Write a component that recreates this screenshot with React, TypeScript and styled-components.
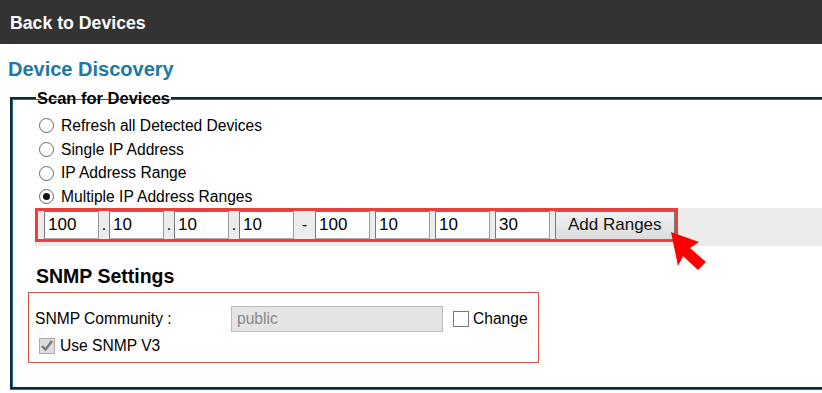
import { FC } from 'react';
import { styled, createGlobalStyle } from 'styled-components';

const GlobalStyle = createGlobalStyle`
    body {
        margin: 0;
        background: #fff;
        font-family: "Liberation Sans", Arial, sans-serif;
        color: #000;
        overflow: hidden;
    }
`;

const Page = styled.div`
    width: 822px;
    height: 393px;
    overflow: hidden;
    position: relative;
`;

const TopBar = styled.div`
    height: 44px;
    background: #333333;
    color: #fff;
    font-size: 17.7px;
    font-weight: bold;
    line-height: 46px;
    padding-left: 10px;
`;

const Title = styled.h1`
    margin: 13px 0 0 8px;
    font-size: 20px;
    line-height: 24px;
    font-weight: bold;
    color: #1a7aa5;
`;

const Scan = styled.fieldset`
    margin: 8px -30px 0 10px;
    padding: 7px 0 24px 23px;
    border: 2px solid #0e2a35;
    box-shadow: inset 1px 1px 0 #1f6f93, 0 1px 0 #1f6f93;
`;

const Legend = styled.legend`
    margin-left: 1px;
    padding: 0 1px;
    font-size: 16.5px;
    font-weight: bold;
    line-height: 18px;
`;

const Option = styled.label`
    display: flex;
    align-items: center;
    height: 23.7px;
    padding-left: 4px;
    font-size: 15.6px;
    gap: 7px;
`;

const Radio = styled.span<{ $on?: boolean }>`
    width: 13px;
    height: 13px;
    border: 1px solid #666;
    border-radius: 50%;
    background: #fff;
    display: flex;
    align-items: center;
    justify-content: center;
    &::after {
        content: '';
        width: 7px;
        height: 7px;
        border-radius: 50%;
        background: ${p => (p.$on ? '#111' : 'transparent')};
    }
`;

const Band = styled.div`
    display: flex;
    align-items: center;
    height: 38px;
    margin-top: -1px;
    background: #ececec;
    padding-bottom: 3px;
    box-sizing: border-box;
`;

const RangeBox = styled.div`
    display: flex;
    align-items: center;
    height: 34px;
    box-sizing: border-box;
    border: 3px solid #e8403d;
    padding: 0 0 0 6px;
`;

const Octet = styled.input`
    width: 55px;
    height: 28px;
    box-sizing: border-box;
    border: 1px solid #777;
    border-right-color: #999;
    border-bottom-color: #aaa;
    padding: 0 0 0 3px;
    font-family: "Liberation Sans", Arial, sans-serif;
    font-size: 17px;
    color: #000;
    background: #fff;
    outline: none;
`;

const Sep = styled.span<{ $w: number }>`
    width: ${p => p.$w}px;
    text-align: center;
    font-size: 16px;
    line-height: 28px;
    align-self: flex-end;
`;

const AddButton = styled.button`
    height: 29px;
    margin-left: 5px;
    padding: 0 12px;
    box-sizing: border-box;
    border: 1px solid #7a7a7a;
    background: linear-gradient(#f2f2f2, #dcdcdc);
    font-family: "Liberation Sans", Arial, sans-serif;
    font-size: 17px;
    color: #111;
`;

const SectionTitle = styled.h2`
    margin: 18px 0 4px 1px;
    font-size: 19.5px;
    line-height: 24px;
    font-weight: bold;
`;

const SnmpBox = styled.div`
    width: 511px;
    height: 71px;
    box-sizing: border-box;
    margin-left: -7px;
    border: 1px solid #e0504a;
    padding: 13px 0 0 6px;
`;

const SnmpRow = styled.div`
    display: flex;
    align-items: center;
    font-size: 15.6px;
    height: 26px;
`;

const FieldLabel = styled.span`
    width: 196px;
`;

const Community = styled.input`
    width: 212px;
    height: 26px;
    box-sizing: border-box;
    border: 1px solid #bcbcbc;
    background: #e4e4e4;
    color: #888;
    font-family: "Liberation Sans", Arial, sans-serif;
    font-size: 15.6px;
    padding: 0 0 0 5px;
`;

const Box = styled.span<{ $checked?: boolean }>`
    width: 14px;
    height: 14px;
    border: 1px solid ${p => (p.$checked ? '#aaa' : '#777')};
    background: ${p => (p.$checked ? '#ddd' : '#fff')};
    display: inline-flex;
    align-items: center;
    justify-content: center;
    margin: 0 4px 0 10px;
`;

const CheckLine = styled.label`
    display: flex;
    align-items: center;
    font-size: 15.6px;
    height: 22px;
    margin-top: 3px;
    & > ${Box} {
        margin-left: 4px;
        margin-right: 5px;
    }
`;

const Cursor = styled.svg`
    position: absolute;
    left: 668px;
    top: 229px;
`;

const Tick = () => (
    <svg width="12" height="11" viewBox="0 0 12 11">
        <path d="M1 6 L4.5 9.5 L11 1" fill="none" stroke="#777" strokeWidth="2.4" />
    </svg>
);

const ipFrom = ['100', '10', '10', '10'];
const ipTo = ['100', '10', '10', '30'];

const options = [
    { label: 'Refresh all Detected Devices', on: false },
    { label: 'Single IP Address', on: false },
    { label: 'IP Address Range', on: false },
    { label: 'Multiple IP Address Ranges', on: true },
];

const App: FC = () => {
    return (
        <Page>
            <GlobalStyle />
            <TopBar>Back to Devices</TopBar>
            <Title>Device Discovery</Title>
            <Scan>
                <Legend>Scan for Devices</Legend>
                {options.map(o => (
                    <Option key={o.label}>
                        <Radio $on={o.on} />
                        {o.label}
                    </Option>
                ))}
                <Band>
                    <RangeBox>
                        {ipFrom.map((v, i) => (
                            <span key={'a' + i} style={{ display: 'contents' }}>
                                {i > 0 && <Sep $w={10}>.</Sep>}
                                <Octet defaultValue={v} />
                            </span>
                        ))}
                        <Sep $w={21}>-</Sep>
                        {ipTo.map((v, i) => (
                            <span key={'b' + i} style={{ display: 'contents' }}>
                                {i > 0 && <Sep $w={5}></Sep>}
                                <Octet defaultValue={v} />
                            </span>
                        ))}
                        <AddButton>Add Ranges</AddButton>
                    </RangeBox>
                </Band>
                <SectionTitle>SNMP Settings</SectionTitle>
                <SnmpBox>
                    <SnmpRow>
                        <FieldLabel>SNMP Community :</FieldLabel>
                        <Community defaultValue="public" disabled />
                        <Box />
                        Change
                    </SnmpRow>
                    <CheckLine>
                        <Box $checked>
                            <Tick />
                        </Box>
                        Use SNMP V3
                    </CheckLine>
                </SnmpBox>
            </Scan>
            <Cursor width="42" height="44" viewBox="0 0 42 44">
                <polygon points="3,3 31,13 22,19 38,33 30,41 15,27 10,37" fill="#ff0000" />
            </Cursor>
        </Page>
    );
};

export default App;
